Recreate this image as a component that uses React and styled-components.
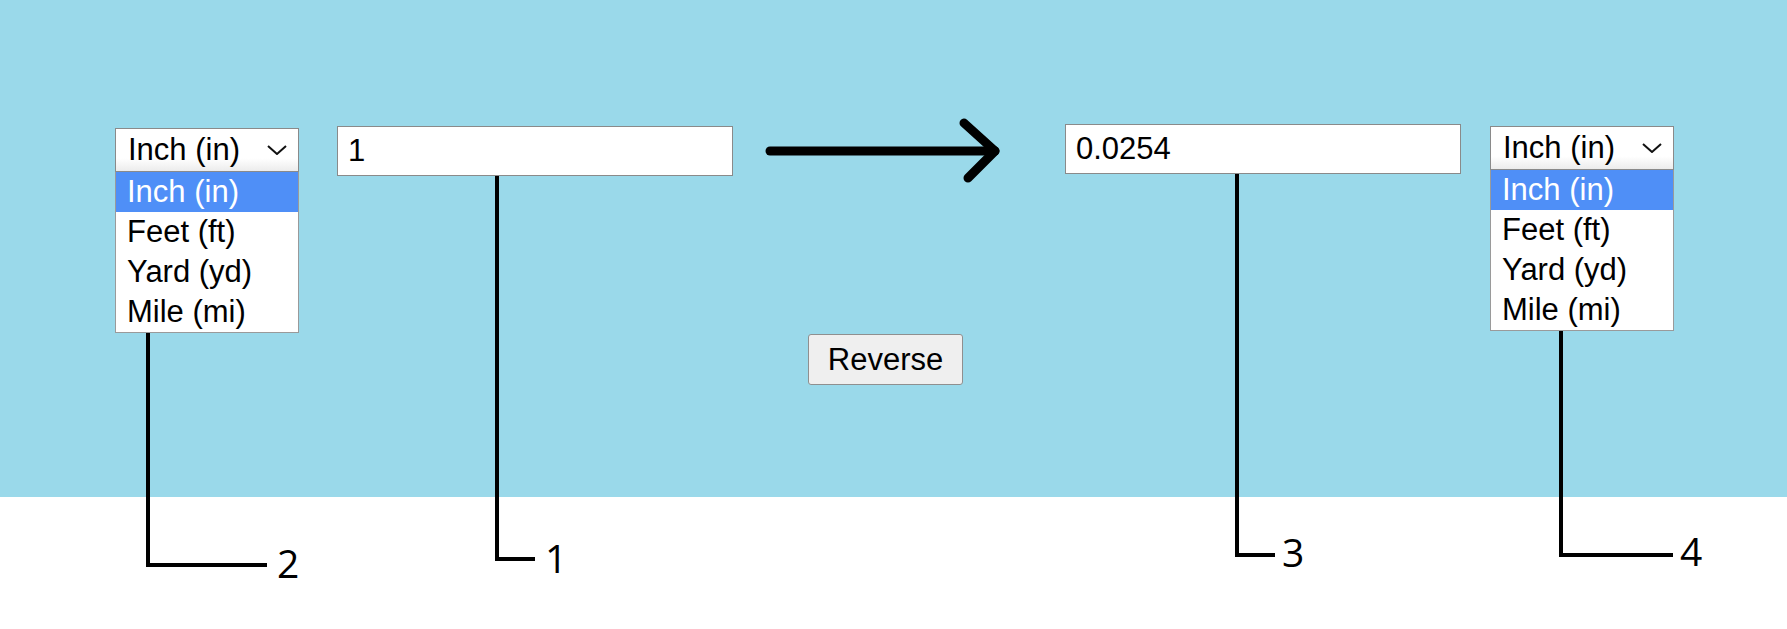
import React from 'react';
import styled, { createGlobalStyle } from 'styled-components';

const GlobalStyle = createGlobalStyle`
  html, body {
    margin: 0;
    padding: 0;
    background: #ffffff;
  }
  body {
    font-family: "Liberation Sans", Arial, sans-serif;
  }
`;

const units = ['Inch (in)', 'Feet (ft)', 'Yard (yd)', 'Mile (mi)'];

const callouts = [
  { id: 2, points: '148,333 148,565 267,565', x: 277, y: 578 },
  { id: 1, points: '497,176 497,559 535,559', x: 545, y: 573 },
  { id: 3, points: '1237,174 1237,555 1275,555', x: 1282, y: 567 },
  { id: 4, points: '1561,331 1561,555 1673,555', x: 1680, y: 566 },
];

function UnitPicker({ top, gap, value }) {
  return (
    <Picker $top={top} $gap={gap}>
      <SelectBox>
        <span>{value}</span>
        <svg width="20" height="10" viewBox="0 0 20 10">
          <polyline
            points="1,1 10,9 19,1"
            fill="none"
            stroke="#111"
            strokeWidth="2"
          />
        </svg>
      </SelectBox>
      <OptionList>
        {units.map(unit => (
          <Option key={unit} $active={unit === value}>
            {unit}
          </Option>
        ))}
      </OptionList>
    </Picker>
  );
}

export default function App() {
  return (
    <Page>
      <GlobalStyle />
      <Band>
        <Row>
          <UnitPicker top={18} gap={0} value="Inch (in)" />
          <ValueInput $top={16} $gap={38} defaultValue="1" />
          <Arrow width="250" height="80" viewBox="0 0 250 80">
            <g
              fill="none"
              stroke="#000"
              strokeWidth="9"
              strokeLinecap="round"
              strokeLinejoin="round"
            >
              <line x1="10" y1="41" x2="235" y2="41" />
              <polyline points="204,13 235,41 208,68" />
            </g>
          </Arrow>
          <ValueInput $top={14} $gap={55} defaultValue="0.0254" readOnly />
          <UnitPicker top={16} gap={29} value="Inch (in)" />
        </Row>
        <ButtonRow>
          <ReverseButton>Reverse</ReverseButton>
        </ButtonRow>
      </Band>
      <Annotations width="1787" height="629" viewBox="0 0 1787 629">
        {callouts.map(c => (
          <g key={c.id}>
            <polyline
              points={c.points}
              fill="none"
              stroke="#000"
              strokeWidth="4"
              strokeLinejoin="miter"
            />
            <Label x={c.x} y={c.y}>
              {c.id}
            </Label>
          </g>
        ))}
      </Annotations>
    </Page>
  );
}

const Page = styled.div`
  position: relative;
  width: 1787px;
  height: 629px;
  overflow: hidden;
  background: #ffffff;
`;

const Band = styled.div`
  display: flex;
  flex-direction: column;
  height: 497px;
  background: #9ad9ea;
  box-sizing: border-box;
  padding-top: 110px;
`;

const Row = styled.div`
  display: flex;
  align-items: flex-start;
  padding-left: 115px;
`;

const Picker = styled.div`
  display: flex;
  flex-direction: column;
  width: 184px;
  margin-top: ${p => p.$top}px;
  margin-left: ${p => p.$gap}px;
`;

const SelectBox = styled.div`
  display: flex;
  align-items: center;
  justify-content: space-between;
  height: 44px;
  box-sizing: border-box;
  padding: 0 11px 0 12px;
  border: 1px solid #8a8a8a;
  background: linear-gradient(#ffffff 70%, #ececec);
  font-size: 31px;
  color: #000;
`;

const OptionList = styled.div`
  display: flex;
  flex-direction: column;
  box-sizing: border-box;
  height: 161px;
  border: 1px solid #9a9a9a;
  border-top: none;
  background: #ffffff;
`;

const Option = styled.div`
  height: 40px;
  line-height: 40px;
  padding-left: 11px;
  font-size: 31px;
  color: ${p => (p.$active ? '#ffffff' : '#000000')};
  background: ${p => (p.$active ? '#4f8ff7' : 'transparent')};
`;

const ValueInput = styled.input`
  width: 396px;
  height: 50px;
  box-sizing: border-box;
  margin: ${p => p.$top}px 0 0 ${p => p.$gap}px;
  padding: 0 10px;
  border: 1px solid #8a8a8a;
  background: #ffffff;
  font-family: "Liberation Sans", Arial, sans-serif;
  font-size: 31px;
  color: #000;
  outline: none;
`;

const Arrow = styled.svg`
  display: block;
  margin-left: 27px;
`;

const ButtonRow = styled.div`
  display: flex;
  justify-content: center;
  padding-right: 16px;
  margin-top: 1px;
`;

const ReverseButton = styled.button`
  width: 155px;
  height: 51px;
  padding: 0;
  border: 1px solid #8f8f8f;
  border-radius: 3px;
  background: #efefef;
  font-family: "Liberation Sans", Arial, sans-serif;
  font-size: 31px;
  color: #000;
`;

const Annotations = styled.svg`
  position: absolute;
  top: 0;
  left: 0;
  pointer-events: none;
`;

const Label = styled.text`
  font-family: "Open Sans", "Noto Sans", sans-serif;
  font-size: 39px;
  fill: #000;
`;
